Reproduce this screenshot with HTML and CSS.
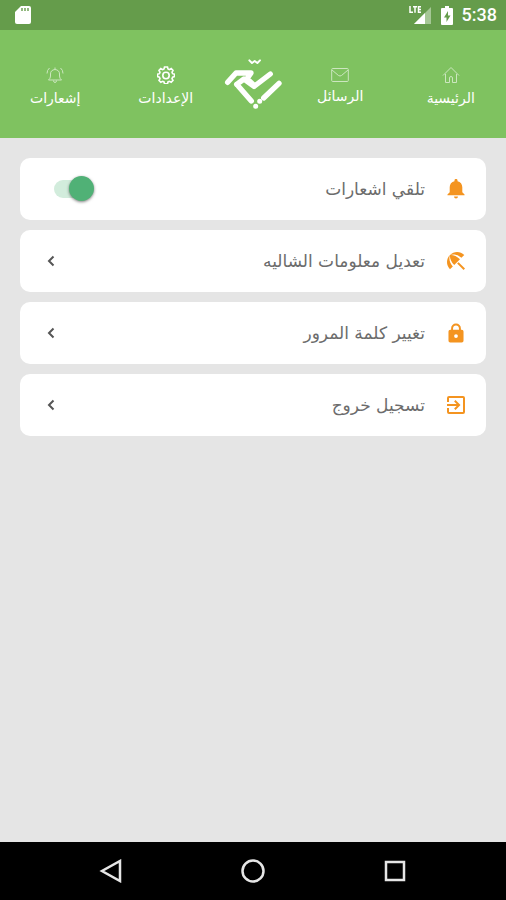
FILE: index.html
```html
<!DOCTYPE html>
<html lang="ar" dir="rtl">
<head>
<meta charset="utf-8">
<meta name="viewport" content="width=device-width, initial-scale=1">
<title>الإعدادات</title>
<link rel="stylesheet" href="styles.css">
</head>
<body>
<div class="status" dir="ltr">
  <svg class="sd" width="16" height="20" viewBox="0 0 16 20"><path fill="#fff" d="M6 1h8a2 2 0 0 1 2 2v14a2 2 0 0 1-2 2H2a2 2 0 0 1-2-2V7z"/><path stroke="#659c4b" stroke-width="1.400" d="M7 3v3M10 3v3M13 3v3"/></svg>
  <svg class="signal" width="23" height="20" viewBox="0 0 23 20"><path fill="#a5c795" d="M22 2v17H5z"/><path fill="#fff" d="M16 8v11H5z"/><path fill="none" stroke="#fff" stroke-width="1.500" d="M1 1v6.200h3M4 1.700h4M6 1.700v6M12 1.700H9.500v5.500H12M9.500 4.500H12"/></svg>
  <svg class="battery" width="12" height="19" viewBox="0 0 12 19"><path fill="#fff" d="M4 0h4v2h3a1 1 0 0 1 1 1v15a1 1 0 0 1-1 1H1a1 1 0 0 1-1-1V3a1 1 0 0 1 1-1h3z"/><path fill="#659c4b" d="M7 5 3 11.500h2.500V16L9.500 9.500H7z"/></svg>
  <span class="time">5:38</span>
</div>

<nav class="tabs">
  <a class="tab" href="#home">
    <svg class="tab-icon faded" viewBox="0 0 18 18"><path d="M1 9.500 9 1.500l8 8M3.500 8v8.500h4V12q0-1.500 1.500-1.500t1.500 1.500v4.500h4V8"/></svg>
    <span>الرئيسية</span>
  </a>
  <a class="tab high" href="#messages">
    <svg class="tab-icon faded" viewBox="0 0 18 18"><rect x="0.700" y="2.500" width="16.600" height="13" rx="1"/><path d="m1 4 6.500 5.500q1.500 1 3 0L17 4"/></svg>
    <span>الرسائل</span>
  </a>
  <a class="brand" href="#top" aria-label="الشعار">
    <svg width="60" height="52" viewBox="25 21 180 156" fill="none" stroke="#fff" stroke-linecap="round" stroke-linejoin="round"><path stroke-width="6" d="m104 28 8 8 8-6 8 6 8-8"/><path stroke-width="16" d="M39 94 64 66h45l-12 17 23 22 47-36M66 100l44 50M66 100l22-16 30 22M193 97l-46 44"/><path stroke-width="15" d="M135 151h.1M123 166h.1"/></svg>
  </a>
  <a class="tab" href="#settings" aria-current="page">
    <svg class="tab-icon" viewBox="0 0 18 18"><path stroke-width="1.600" d="m7.500 1h3l.5 2 1.300.6 1.900-1.100 1.800 1.900-1 1.900.6 1.400 1.900.5v2.400l-1.900.6-.6 1.400 1 1.800-1.800 1.900-1.900-1-1.300.6-.5 2h-3L7 15.900l-1.300-.6-1.900 1L2 14.400l1-1.800-.6-1.400-1.900-.6V8.200l1.900-.5L3 6.300l-1-1.900 1.800-1.900 1.900 1.100L7 3z"/><circle cx="9" cy="9.500" r="3.200" stroke-width="1.600"/></svg>
    <span>الإعدادات</span>
  </a>
  <a class="tab" href="#notifications">
    <svg class="tab-icon faded" viewBox="0 0 18 18"><path d="M2.500 14q2-1.500 2-4V8q0-4 4.500-4.500Q13.500 4 13.500 8v2q0 2.500 2 4zM7.500 14.500q0 2 1.500 2t1.500-2M9 3.500V1.500M3.500 2Q1 4 1 7.500M14.500 2Q17 4 17 7.500"/></svg>
    <span>إشعارات</span>
  </a>
</nav>

<main class="list">
  <label class="row">
    <svg class="row-icon" viewBox="2 2 20 21"><path d="M12 23a2.200 2.200 0 0 0 2.200-2.200H9.800A2.200 2.200 0 0 0 12 23zM19 16v-5.500c0-3.400-2-6-5.300-6.700V3a1.700 1.700 0 0 0-3.400 0v.8C7 4.500 5 7.100 5 10.500V16l-2.500 2.500v1h19v-1z"/></svg>
    <span class="row-text">تلقي اشعارات</span>
    <input class="switch" type="checkbox" role="switch" checked>
  </label>
  <button class="row" type="button">
    <svg class="row-icon" viewBox="3 3 18 18"><path d="m13.130 14.560 1.430-1.430 6.440 6.440L19.570 21zM17.420 8.830l2.860-2.860c-3.950-3.950-10.350-3.960-14.300-.02 3.930-1.300 8.310-.25 11.440 2.880zM5.950 5.980c-3.940 3.950-3.930 10.350.02 14.300l2.860-2.860C5.700 14.290 4.650 9.910 5.950 5.980zM5.970 5.960l-.01.010c-.38 3.010 1.170 6.880 4.300 10.020l5.730-5.730c-3.130-3.130-7.010-4.680-10.020-4.300z"/></svg>
    <span class="row-text">تعديل معلومات الشاليه</span>
    <svg class="chevron" viewBox="0 0 8 12"><path d="M6.500 1.500 2 6l4.500 4.500"/></svg>
  </button>
  <button class="row" type="button">
    <svg class="row-icon" viewBox="1 1 22 22"><path d="M19 8h-1V6.500A5.800 5.800 0 0 0 12 .5a5.800 5.800 0 0 0-6 6V8H5a2.200 2.200 0 0 0-2.200 2.200v11A2.200 2.200 0 0 0 5 23.500h14a2.200 2.200 0 0 0 2.200-2.300v-11A2.200 2.200 0 0 0 19 8zm-7 10a2.300 2.300 0 1 1 0-4.600 2.300 2.300 0 0 1 0 4.600zM15.600 8H8.400V6.500c0-2.200 1.500-3.700 3.600-3.700s3.600 1.500 3.600 3.700z"/></svg>
    <span class="row-text">تغيير كلمة المرور</span>
    <svg class="chevron" viewBox="0 0 8 12"><path d="M6.500 1.500 2 6l4.500 4.500"/></svg>
  </button>
  <button class="row" type="button">
    <svg class="row-icon" viewBox="3 3 18 18"><path d="M10.090 15.590 11.500 17l5-5-5-5-1.410 1.410L12.670 11H3v2h9.670zM19 3H5a2 2 0 0 0-2 2v4h2V5h14v14H5v-4H3v4a2 2 0 0 0 2 2h14a2 2 0 0 0 2-2V5a2 2 0 0 0-2-2z"/></svg>
    <span class="row-text">تسجيل خروج</span>
    <svg class="chevron" viewBox="0 0 8 12"><path d="M6.500 1.500 2 6l4.500 4.500"/></svg>
  </button>
</main>

<footer class="system" dir="ltr">
  <button type="button" aria-label="رجوع"><svg width="24" height="24" viewBox="0 0 24 24"><path d="M21 2v20L3 12z"/></svg></button>
  <button type="button" aria-label="الشاشة الرئيسية"><svg width="24" height="24" viewBox="0 0 24 24"><circle cx="12" cy="12" r="10.500"/></svg></button>
  <button type="button" aria-label="التطبيقات الأخيرة"><svg width="24" height="24" viewBox="0 0 24 24"><rect x="3" y="3" width="18" height="18"/></svg></button>
</footer>
</body>
</html>
```
FILE: styles.css
```css
* {
  box-sizing: border-box;
}

body {
  margin: 0;
  min-height: 100vh;
  display: flex;
  flex-direction: column;
  background: #e5e5e5;
  font-family: "DejaVu Sans", sans-serif;
}

.status {
  display: flex;
  align-items: center;
  height: 30px;
  padding: 0 9px 0 15px;
  background: #659c4b;
}

.signal {
  margin-left: auto;
}

.battery {
  margin: 0 9px;
}

.time {
  color: #fff;
  font: 500 18px/30px Roboto, sans-serif;
}

.tabs {
  display: grid;
  grid-template-columns: 1fr 1fr 64px 1fr 1fr;
  height: 108px;
  background: #7fc260;
}

.tab {
  display: flex;
  flex-direction: column;
  align-items: center;
  gap: 4px;
  padding-top: 36px;
  color: #fff;
  font-size: 14px;
  line-height: 20px;
  text-decoration: none;
}

.high {
  gap: 2px;
}

.tab-icon {
  width: 18px;
  height: 18px;
  fill: none;
  stroke: #fff;
  stroke-width: 1;
}

.faded {
  opacity: 0.6;
}

.brand {
  display: flex;
  justify-content: center;
  align-items: center;
}

.list {
  flex: 1;
  display: flex;
  flex-direction: column;
  gap: 10px;
  padding: 20px;
}

.row {
  display: flex;
  align-items: center;
  gap: 22px;
  width: 100%;
  height: 62px;
  padding: 0 21px 0 27px;
  border: 0;
  border-radius: 10px;
  background: #fff;
  color: #6c6c6c;
  font: 17px/24px "DejaVu Sans", sans-serif;
  text-align: start;
}

.row-icon {
  width: 18px;
  height: 20px;
  fill: #f49420;
}

.row-text {
  flex: 1;
}

.chevron {
  width: 8px;
  height: 12px;
  fill: none;
  stroke: #555;
  stroke-width: 2;
}

.switch {
  appearance: none;
  position: relative;
  width: 36px;
  height: 18px;
  margin: 0 0 0 7px;
  border-radius: 9px;
  background: #d2ecdc;
}

.switch::before {
  content: "";
  position: absolute;
  top: -4px;
  right: -4px;
  width: 25px;
  height: 25px;
  border-radius: 50%;
  background: #50b176;
  box-shadow: 0 1px 3px rgba(0, 0, 0, 0.5);
}

.system {
  display: flex;
  justify-content: center;
  gap: 118px;
  height: 58px;
  background: #000;
}

.system button {
  display: flex;
  align-items: center;
  padding: 0;
  border: 0;
  background: none;
}

.system svg {
  fill: none;
  stroke: #e6e6e6;
  stroke-width: 2.5;
}
```
